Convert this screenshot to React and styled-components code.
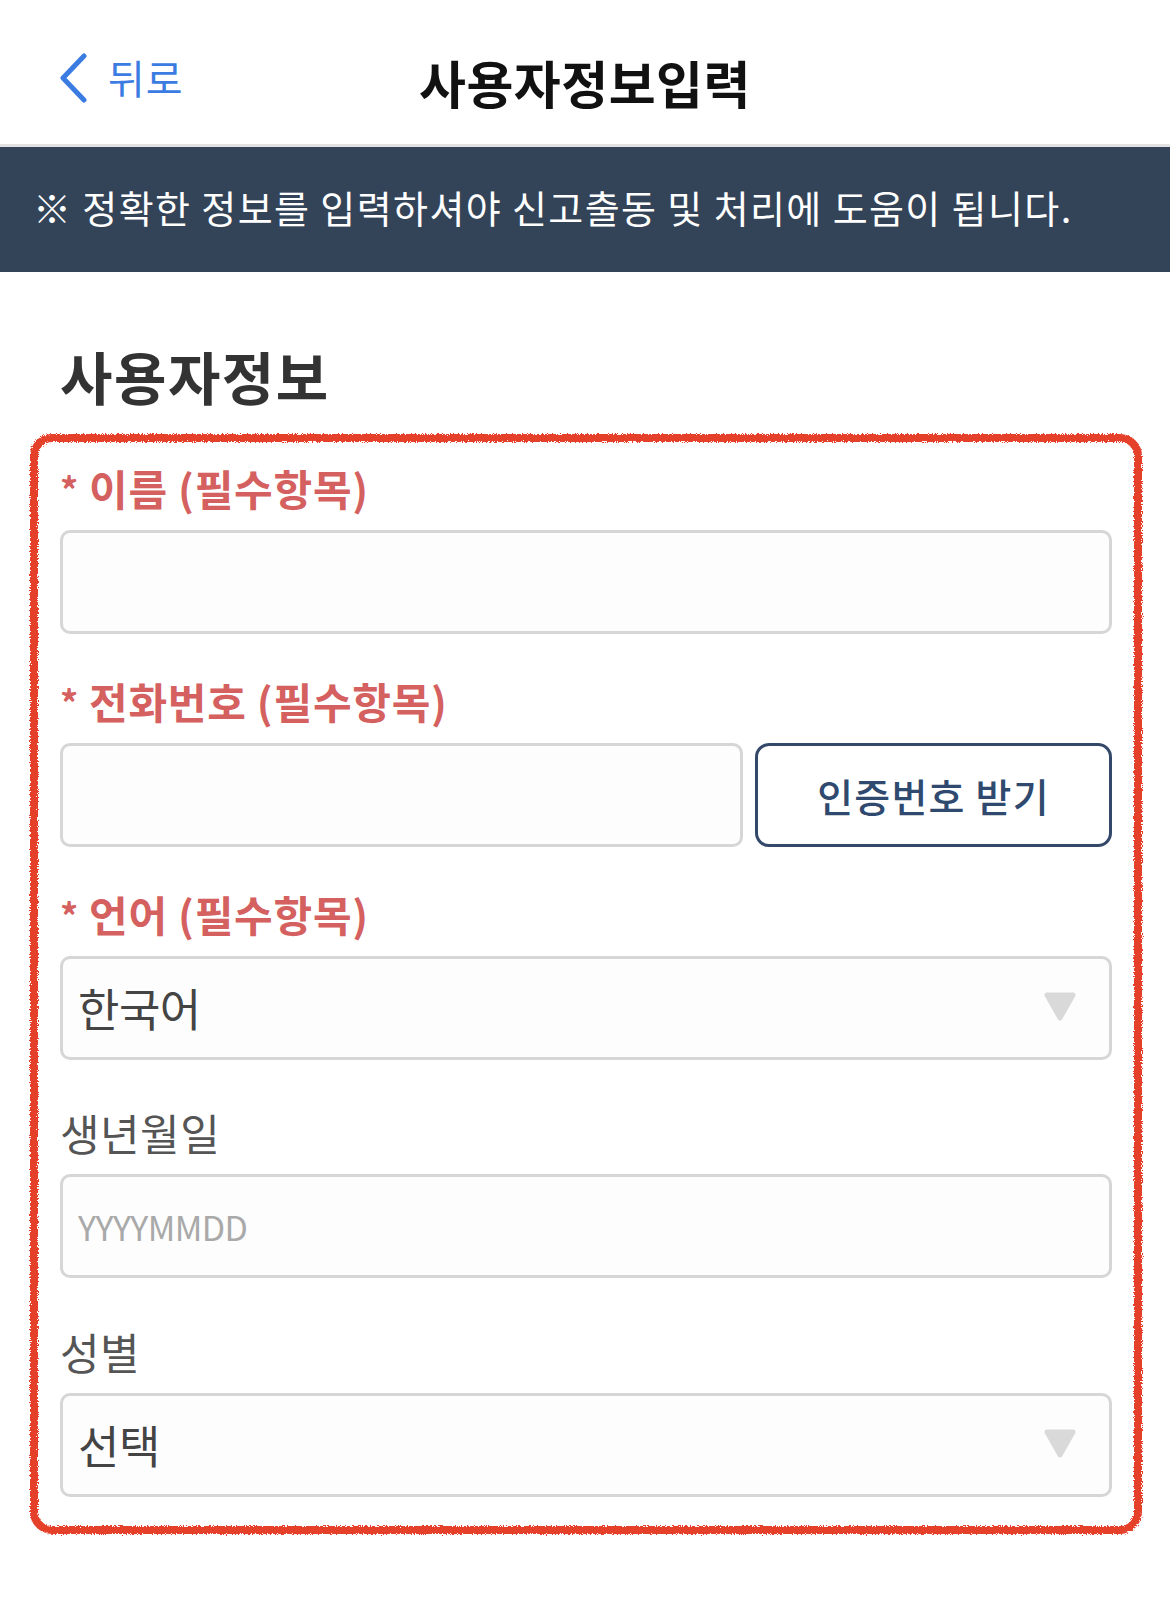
import React from "react";
import styled, { createGlobalStyle } from "styled-components";

const GlobalStyle = createGlobalStyle`
  html, body {
    margin: 0;
    padding: 0;
    background: #ffffff;
  }
  body {
    font-family: "Noto Sans CJK KR", "Noto Sans", sans-serif;
    color: #333;
  }
  * {
    box-sizing: border-box;
  }
`;

const Page = styled.div`
  width: 1170px;
  min-height: 1611px;
  background: #fff;
`;

const Header = styled.header`
  height: 147px;
  padding-top: 10px;
  border-bottom: 3px solid #e3e3e3;
  display: grid;
  grid-template-columns: 1fr auto 1fr;
  align-items: center;
`;

const BackButton = styled.button`
  justify-self: start;
  display: flex;
  align-items: center;
  gap: 20px;
  margin-left: 58px;
  padding: 0;
  border: 0;
  background: none;
  color: #3b7ce2;
  font-family: inherit;
  font-size: 40px;
  letter-spacing: 1px;
  cursor: pointer;
  svg {
    margin-top: 2px;
  }
`;

const Title = styled.h1`
  margin: 0;
  padding-top: 10px;
  font-size: 51px;
  font-weight: 700;
  letter-spacing: 0.5px;
  color: #111;
`;

const Notice = styled.div`
  height: 125px;
  background: #344458;
  color: #fff;
  display: flex;
  align-items: center;
  padding: 0 0 6px 33px;
  font-size: 38px;
  letter-spacing: 1.4px;
`;

const SectionTitle = styled.h2`
  margin: 68px 0 24px 60px;
  font-size: 57px;
  line-height: 70px;
  font-weight: 700;
  letter-spacing: 1.5px;
  color: #333;
`;

const FormBox = styled.section`
  position: relative;
  margin: 0 28px 0 30px;
  padding: 26px 30px 37px 30px;
  &::before {
    content: "";
    position: absolute;
    inset: 0;
    border: 8px solid #e5402b;
    border-radius: 22px;
    filter: url(#rough);
    pointer-events: none;
  }
`;

const Field = styled.div`
  margin-top: ${(p) => p.$gap}px;
  &:first-child {
    margin-top: 0;
  }
`;

const Label = styled.label`
  display: block;
  height: 56px;
  line-height: 56px;
  margin-bottom: 14px;
  font-size: ${(p) => (p.$required ? 42 : 43)}px;
  font-weight: ${(p) => (p.$required ? 700 : 400)};
  letter-spacing: ${(p) => (p.$required ? 0.75 : 0.5)}px;
  color: ${(p) => (p.$required ? "#d46060" : "#555")};
`;

const Star = styled.span`
  display: inline-block;
  margin-right: 10px;
  font-size: 36px;
  vertical-align: 2px;
`;

const Row = styled.div`
  display: flex;
  gap: 12px;
`;

const TextInput = styled.input`
  flex: 1;
  width: 100%;
  height: 104px;
  border: 3px solid #d6d6d6;
  border-radius: 10px;
  background: #fdfdfd;
  padding: 0 15px;
  font-family: "Noto Sans CJK KR", "Noto Sans", sans-serif;
  font-size: 34px;
  letter-spacing: -0.6px;
  color: #333;
  outline: none;
  &::placeholder {
    color: #a9a9a9;
  }
`;

const CodeButton = styled.button`
  flex: 0 0 357px;
  height: 104px;
  border: 3px solid #34496a;
  border-radius: 14px;
  background: #fff;
  color: #2f4a6e;
  font-family: inherit;
  font-size: 39px;
  font-weight: 500;
  letter-spacing: 1.2px;
  cursor: pointer;
`;

const SelectBox = styled.div`
  height: 104px;
  border: 3px solid #d6d6d6;
  border-radius: 10px;
  background: #fdfdfd;
  display: flex;
  align-items: center;
  justify-content: space-between;
  padding: 0 32px 2px 15px;
  font-size: 45px;
  letter-spacing: -0.5px;
  color: #444;
`;

const Chevron = () => (
  <svg width="30" height="50" viewBox="0 0 30 50">
    <polyline
      points="26,3 5,25 26,47"
      fill="none"
      stroke="#3b7ce2"
      strokeWidth="5"
      strokeLinecap="round"
      strokeLinejoin="round"
    />
  </svg>
);

const Caret = () => (
  <svg width="34" height="32" viewBox="0 0 34 32">
    <path
      d="M4 4 L30 4 L17 27 Z"
      fill="#d9d9d9"
      stroke="#d9d9d9"
      strokeWidth="5"
      strokeLinejoin="round"
    />
  </svg>
);

const RoughFilter = () => (
  <svg width="0" height="0" style={{ position: "absolute" }}>
    <filter id="rough">
      <feTurbulence type="fractalNoise" baseFrequency="0.8" numOctaves="2" seed="3" />
      <feDisplacementMap in="SourceGraphic" scale="5" />
    </filter>
  </svg>
);

const Select = ({ value }) => (
  <SelectBox>
    <span>{value}</span>
    <Caret />
  </SelectBox>
);

const RequiredLabel = ({ children }) => (
  <Label $required>
    <Star>*</Star>
    {children}
  </Label>
);

export default function App() {
  return (
    <Page>
      <GlobalStyle />
      <RoughFilter />
      <Header>
        <BackButton>
          <Chevron />
          뒤로
        </BackButton>
        <Title>사용자정보입력</Title>
        <div />
      </Header>
      <Notice>※ 정확한 정보를 입력하셔야 신고출동 및 처리에 도움이 됩니다.</Notice>

      <SectionTitle>사용자정보</SectionTitle>
      <FormBox>
        <Field $gap={0}>
          <RequiredLabel>이름 (필수항목)</RequiredLabel>
          <TextInput type="text" />
        </Field>
        <Field $gap={39}>
          <RequiredLabel>전화번호 (필수항목)</RequiredLabel>
          <Row>
            <TextInput type="tel" />
            <CodeButton>인증번호 받기</CodeButton>
          </Row>
        </Field>
        <Field $gap={39}>
          <RequiredLabel>언어 (필수항목)</RequiredLabel>
          <Select value="한국어" />
        </Field>
        <Field $gap={44}>
          <Label>생년월일</Label>
          <TextInput type="text" placeholder="YYYYMMDD" />
        </Field>
        <Field $gap={45}>
          <Label>성별</Label>
          <Select value="선택" />
        </Field>
      </FormBox>
    </Page>
  );
}
